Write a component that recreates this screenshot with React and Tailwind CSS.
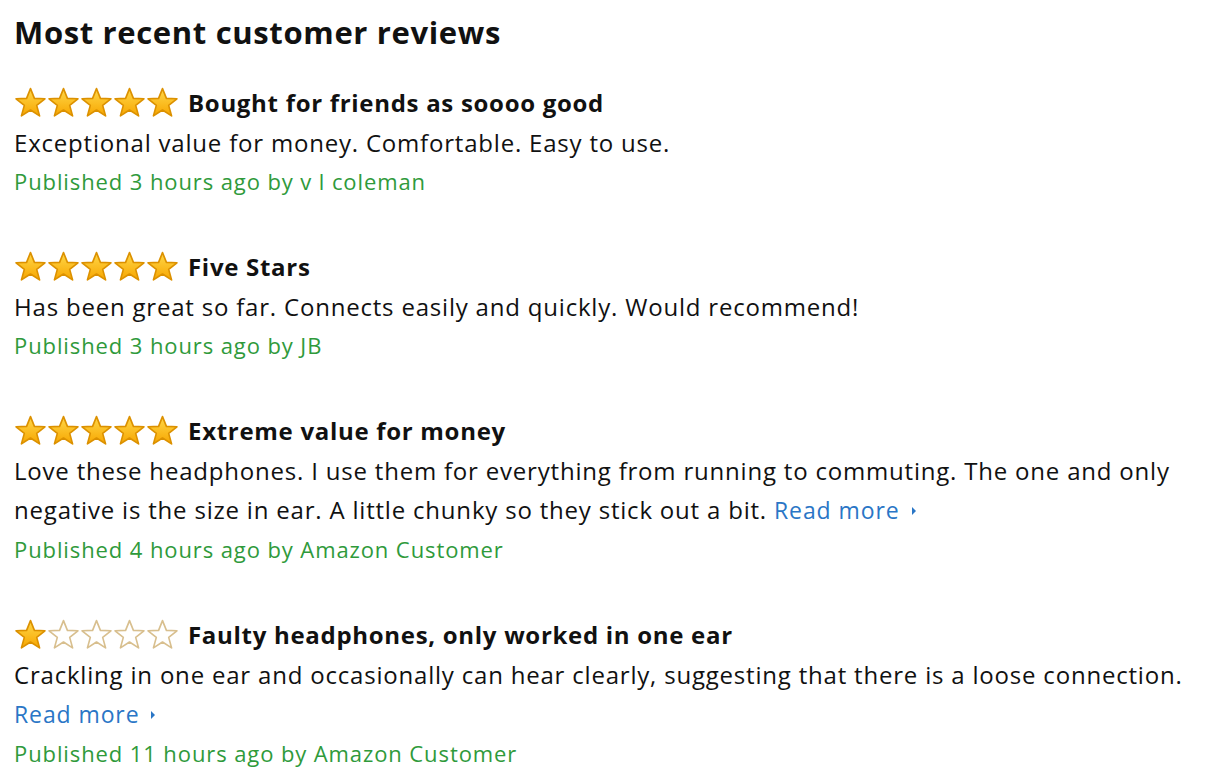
const reviews = [
  {
    rating: 5,
    title: 'Bought for friends as soooo good',
    body: 'Exceptional value for money. Comfortable. Easy to use.',
    meta: 'Published 3 hours ago by v l coleman',
  },
  {
    rating: 5,
    title: 'Five Stars',
    body: 'Has been great so far. Connects easily and quickly. Would recommend!',
    meta: 'Published 3 hours ago by JB',
  },
  {
    rating: 5,
    title: 'Extreme value for money',
    body: 'Love these headphones. I use them for everything from running to commuting. The one and only negative is the size in ear. A little chunky so they stick out a bit.',
    more: true,
    meta: 'Published 4 hours ago by Amazon Customer',
  },
  {
    rating: 1,
    title: 'Faulty headphones, only worked in one ear',
    body: 'Crackling in one ear and occasionally can hear clearly, suggesting that there is a loose connection.',
    more: true,
    meta: 'Published 11 hours ago by Amazon Customer',
  },
]

function Star({ filled }) {
  return (
    <svg width="33" height="31" viewBox="0 0 32 30" className="shrink-0">
      <defs>
        <linearGradient id="gold" x1="0" y1="0" x2="0" y2="1">
          <stop offset="0" stopColor="#ffd84a" />
          <stop offset="1" stopColor="#f7a600" />
        </linearGradient>
      </defs>
      <polygon
        points="16,1.5 19.8,11 30,11.4 22,17.8 24.8,28 16,22.3 7.2,28 10,17.8 2,11.4 12.2,11"
        fill={filled ? 'url(#gold)' : '#ffffff'}
        stroke={filled ? '#dc9100' : '#d8bf8e'}
        strokeWidth="1.6"
        strokeLinejoin="round"
      />
    </svg>
  )
}

function ReadMore() {
  return (
    <span className="text-[23px] tracking-[0.9px] text-[#2a76c6]">
      Read more
      <span className="ml-3 mb-1 inline-block border-y-[4px] border-l-[4px] border-y-transparent border-l-[#2a76c6] align-middle" />
    </span>
  )
}

function App() {
  return (
    <div className="min-h-screen bg-white px-[14px] pt-[10px] font-['Open_Sans',sans-serif] text-[#111]">
      <h1 className="text-[31px] font-bold leading-[44px] tracking-[0.65px]">Most recent customer reviews</h1>

      <div className="mt-[28px] space-y-[45px]">
        {reviews.map((r, i) => (
          <div key={i} className="text-[24px] tracking-[0.8px]">
            <div className="flex h-[41px] items-center">
              <div className="flex">
                {[0, 1, 2, 3, 4].map((s) => (
                  <Star key={s} filled={s < r.rating} />
                ))}
              </div>
              <span className="ml-[9px] font-bold tracking-[0.7px]">{r.title}</span>
            </div>
            <p className="pr-2 leading-[39px]">
              {r.body}
              {r.more && (
                <>
                  {' '}
                  <ReadMore />
                </>
              )}
            </p>
            <p className="text-[22px] leading-[39px] tracking-[0.9px] text-[#2f9a3b]">{r.meta}</p>
          </div>
        ))}
      </div>
    </div>
  )
}

export default App
